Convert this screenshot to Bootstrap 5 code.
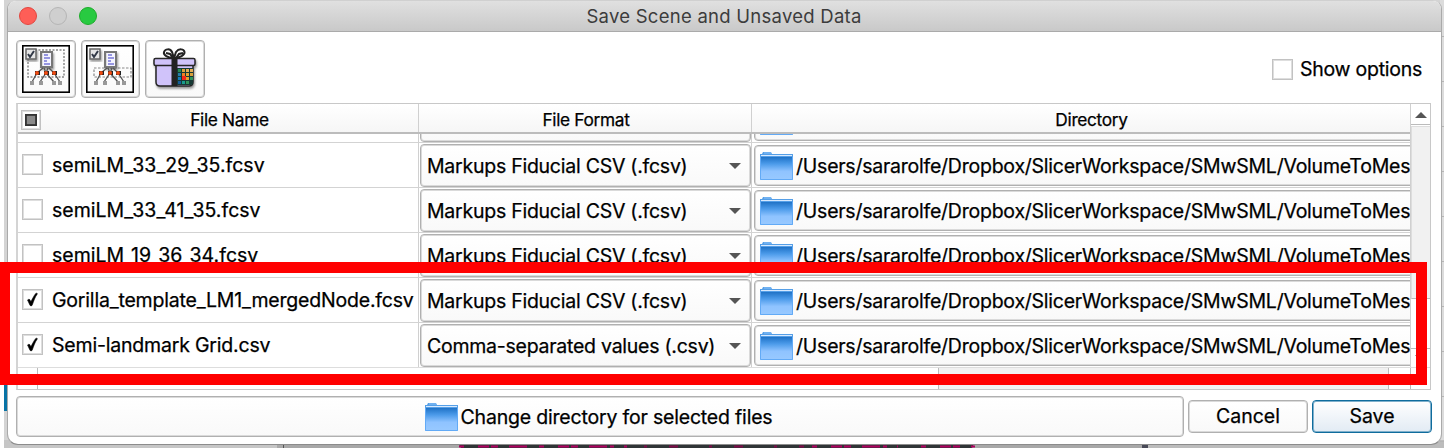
<!DOCTYPE html>
<html lang="en">
<head>
<meta charset="utf-8">
<title>Save Scene and Unsaved Data</title>
<link href="https://cdn.jsdelivr.net/npm/bootstrap@5.3.0/dist/css/bootstrap.min.css" rel="stylesheet">
<style>
body{width:1444px;height:448px;font-family:Inter,"Liberation Sans",sans-serif;font-size:19.5px;line-height:24px;letter-spacing:-.25px;color:#000;-webkit-text-stroke:.25px #000;background:linear-gradient(90deg,#fff 0 4px,#d4d4d4 4px 1440px,#dcdcdc 1440px)}
.desk{height:448px;padding:0 2px 0 7px}
.desk-blue{left:4px;top:384px;width:8px;height:27px;background:#0873a5}
.desk-below{left:4px;top:440px;width:1440px;height:8px}
.win{height:445px;border:1px solid #aaa;border-top-color:#d0d0d0;border-bottom-color:#8c8c8c;border-radius:9px 9px 11px 11px;background:#fff}
.titlebar{height:31px;flex:none;background:linear-gradient(#e0e0e0,#c9c9c9);border-bottom:1px solid #aaa;padding:0 90px 1px 11px;font-size:18.5px;letter-spacing:.26px;color:#3c3c3c;-webkit-text-stroke:0}
.lamps{gap:12px}
.lamp{width:18px;height:18px;border-radius:50%;border:1px solid}
.lamp-r{background:#fe5e57;border-color:#e2463f}.lamp-o{background:#cfcfcf;border-color:#b5b5b5}.lamp-g{background:#28ca41;border-color:#1dac2b}
.winbody{padding:8px 10px 0 8px}
.tools{height:58px;gap:5px;margin-bottom:5px}
.face{border:1px solid #b0b0b0;box-shadow:inset 0 0 0 1px #dadada;border-radius:4px;background:linear-gradient(#fff,#f9f9f9);padding:0;color:#000}
.tool{width:59.5px;height:58px}
.tool svg{display:block}
.box{width:21px;height:21px;border:1.500px solid #c2c2c2;box-shadow:inset 0 0 0 1px #dedede;background:#fff;flex:none}
.box svg{margin:1px}
.opts{gap:7px;padding-right:9px}
.tbl{height:287px;border:1px solid #c8c8c8;border-left:2px solid #d4d4d4}
.view{width:1392px;flex:none;overflow:hidden}
.line{flex:none}
.head{height:30px;background:linear-gradient(#fff,#f6f6f6);border-bottom:2px solid #bcbcbc;font-size:17.3px;letter-spacing:-.32px}
.head .box{width:20px;height:20px}
.c1{width:401px;border-right:1px solid #d0d0d0;flex:none}
.c2{width:333px;border-right:1px solid #d0d0d0;flex:none}
.c3{width:659px;flex:none;overflow:hidden}
.head .c1{padding:3px 0 0 3px}
.head .c2{padding:4px 0 0 2px}
.head .c3{padding:4px 0 0 20px}
.rowline{height:45px;flex:none;border-bottom:1px solid #d3d3d3}
.rowline .c1{padding:0 0 2px 4px;gap:9px}
.rowline .c1 span+span{padding-top:1px}
.rowline .c2{padding:1px 0 0 1px}
.rowline .c3{padding:2px 0 2px 2px}
.wide-set{letter-spacing:.02px}
.name-set{letter-spacing:-.19px}
.combo{height:43px;width:331px;padding:1px 9px 0 6px}
.dir{height:41px;width:900px;padding:0 0 0 4px;gap:2px;letter-spacing:-.235px}
.partial{height:9px;overflow:hidden;flex:none}
.vbar{border-left:1px solid #d0d0d0;background:#fff}
.vup{height:21px;border-bottom:1px solid #bbb}
.track{background:#f1f1f1}
.vtrack{height:173px;border:solid #ddd;border-width:1px 0 1px 1px;border-bottom-color:#bbb;margin-top:1px}
.vthumb{height:50px;border-bottom:1px solid #bbb}
.hbar{height:22px;border-top:1px solid #ddd;background:#fff}
.hbar>div{border-right:1px solid #bbb;flex:none}
.foot{padding-top:6px;gap:4px;width:1416px}
.chg{width:1168px;height:41px;gap:2px;letter-spacing:-.19px;padding-right:4px}
.dlg{height:33px;width:120px;padding-bottom:1px}
.save{border-color:#0f6c9d;box-shadow:inset 0 0 0 1px #7fb0cc;background:linear-gradient(#fff,#e2ebf4)}
.redbox{left:0;top:262px;width:1427px;height:123px;border:11px solid #f00;border-left-width:10px}
</style>
</head>
<body class="position-relative overflow-hidden">
<svg width="0" height="0" class="position-absolute">
<defs>
<linearGradient id="fg" x1="0" y1="0" x2="0" y2="1"><stop offset="0" stop-color="#1f72c6"/><stop offset=".3" stop-color="#4c9bea"/><stop offset=".62" stop-color="#8fc3ff"/><stop offset="1" stop-color="#98c9ff"/></linearGradient>
<filter id="sh" x="-20%" y="-20%" width="150%" height="150%"><feDropShadow dx="1" dy="2" stdDeviation="1" flood-opacity=".4"/></filter>
<symbol id="folder" viewBox="0 0 35 32"><path d="M1 4h2l1-2h8l1 2h21v6H1z" fill="#559fe7"/><path d="M5 3h7" stroke="#8cc3fa"/><path d="M2 5.500h31" stroke="#d8eaff"/><rect x="1" y="7" width="33" height="23" fill="url(#fg)"/><path d="M1.500 7v22.500h32V7" fill="none" stroke="#62aaf6"/></symbol>
<symbol id="tree" viewBox="0 0 48 48">
<rect x="19" y="7" width="11" height="15" fill="#ddd" stroke="#777" stroke-width="2" filter="url(#sh)"/><rect x="21" y="8" width="8" height="13" fill="#f4f4ff"/><path d="M22 10h4M22 13h6M22 16h3M22 19h6" stroke="#7777d8" stroke-width="1.500"/>
<path d="M21 23L15 28 10 37M22 23 24 28 18 37M26 23 24 28 32 37M27 23 32 28 38 37" fill="none" stroke="#555" stroke-width="1.300"/>
<g fill="#222"><rect x="13" y="26" width="5" height="4"/><rect x="22" y="26" width="5" height="4"/><rect x="30" y="26" width="5" height="4"/></g>
<g fill="#ef4b12"><circle cx="15" cy="28" r="2"/><circle cx="24" cy="28" r="2"/><circle cx="32" cy="28" r="2"/></g>
<g fill="#999"><rect x="8" y="36" width="4" height="4"/><rect x="17" y="36" width="4" height="4"/><rect x="30" y="36" width="4" height="4"/><rect x="36" y="36" width="4" height="4"/></g>
<rect x="4" y="4" width="10" height="10" fill="#e6e6e6" stroke="#666" stroke-width="1.500" filter="url(#sh)"/><path d="M6 9l2 3 4-6" fill="none" stroke="#333a48" stroke-width="2"/>
<rect x=".75" y=".75" width="46.500" height="46.500" fill="none" stroke="#000" stroke-width="1.700"/></symbol>
<symbol id="tick" viewBox="0 0 17 17"><path d="M3.500 9c1-1 2.300-1 2.800.5L7 10.500C8.500 7.500 10 4.500 11.700 2.500c1-.7 2-.2 1.500.7C11 6 9.800 10 8.300 14c-.5 1.200-2 1.200-2.500 0z" fill="#000" stroke="#000" stroke-width=".5"/></symbol>
</defs></svg>

<div class="position-absolute desk-blue"></div>
<svg class="position-absolute desk-below" viewBox="0 0 1440 8"><rect width="273" height="8" fill="#c6c6c6"/><rect x="273" width="7" height="8" fill="#aaa"/><rect x="279" width="1" height="8" fill="#555"/><rect x="280" width="1160" height="8" fill="#a8a8a8"/><path d="M452 0h520l-4 8H457z" fill="#303436"/><path d="M455 6.500h70M535 6.500h92M808 6.500h86M917 6.500h54" stroke="#b00060" stroke-width="2" stroke-dasharray="5 14 11 2 7 11 18 3 4 10 3 7"/><path d="M640 6.500h160" stroke="#7e0a49" stroke-width="2" stroke-dasharray="3 22 9 31"/><rect x="1138" width="6" height="8" fill="#484957"/><rect x="1144" width="296" height="8" fill="#bcbcbc"/></svg>
<svg class="position-absolute end-0 top-0" width="4" height="448"><path d="M0 36.500h4M0 81.500h4M0 126.500h4M0 171.500h4M0 216.500h4M0 261.500h4M0 306.500h4M0 351.500h4M0 396.500h4M0 441.500h4" stroke="#b5b5b5"/></svg>

<main class="desk position-relative">
<div class="win d-flex flex-column overflow-hidden">
  <header class="titlebar d-flex align-items-center">
    <div class="lamps d-flex"><span class="lamp lamp-r"></span><span class="lamp lamp-o"></span><span class="lamp lamp-g"></span></div>
    <div class="flex-grow-1 text-center">Save Scene and Unsaved Data</div>
  </header>
  <div class="winbody">
    <div class="tools d-flex">
      <button class="face tool d-flex align-items-center justify-content-center"><svg width="48" height="48" viewBox="0 0 48 48"><rect x="6" y="5" width="36" height="27" fill="none" stroke="#888" stroke-width="1.500" stroke-dasharray="2 1.500"/><use href="#tree"/></svg></button>
      <button class="face tool d-flex align-items-center justify-content-center"><svg width="48" height="48" viewBox="0 0 48 48"><rect x="8" y="23" width="37" height="9" fill="none" stroke="#888" stroke-width="1.200" stroke-dasharray="2.500 1.500"/><use href="#tree"/></svg></button>
      <button class="face tool d-flex align-items-center justify-content-center"><svg width="48" height="48" viewBox="0 0 48 48">
        <g filter="url(#sh)"><path d="M5 17h37v20q0 4-4 4H9q-4 0-4-4z" fill="#d0c3fa" stroke="#252525" stroke-width="1.500"/><rect x="3" y="13.500" width="41" height="7" rx="1.500" fill="#d0c3fa" stroke="#252525" stroke-width="1.500"/><rect x="20.500" y="13" width="6" height="28" fill="#202020"/></g>
        <path d="M22 13C17 13 12 10 13 7s6-4 8 0l2 6 2-6c3-4 8-3 8.500 0s-5 6-9.500 6M22 13l-3-4-4-1M25 13l3-4 4-1" fill="none" stroke="#222" stroke-width="2"/>
        <path d="M26 23h16v15q0 2-2 2H26z" fill="#173a35"/>
        <path d="M27 24h3v3h-3z" fill="#278a54"/><path d="M31 24h3v3h-3zM39 28h3v3h-3z" fill="#d9a13c"/><path d="M35 24h3v3h-3zM39 24h3v3h-3z" fill="#e3ad55"/><path d="M27 28h3v3h-3z" fill="#267eaa"/><path d="M31 28h3v3h-3z" fill="#f07e24"/><path d="M35 28h3v3h-3zM35 32h3v3h-3z" fill="#e7a12e"/><path d="M27 32h3v3h-3z" fill="#147cba"/><path d="M31 31h4v4h-4z" fill="#f32718"/><path d="M39 32h3v3h-3zM35 36h3v3h-3z" fill="#31935b"/><path d="M27 36h3v3h-3z" fill="#155c9a"/><path d="M31 36h3v3h-3z" fill="#1a9c8d"/></svg></button>
      <label class="opts d-flex align-items-center ms-auto"><span class="box"></span><span>Show options</span></label>
    </div>
    <section class="tbl d-flex flex-column">
      <div class="d-flex flex-grow-1 overflow-hidden">
        <div class="view d-flex flex-column">
          <div class="head line d-flex">
            <div class="c1 d-flex align-items-center"><span class="box d-flex align-items-center justify-content-center"><svg width="12" height="12" viewBox="0 0 13 13"><rect x="1" y="1" width="11" height="11" fill="#8a8a8a" stroke="#333" stroke-width="2"/></svg></span><span class="flex-grow-1 text-center">File Name</span></div>
            <div class="c2 d-flex align-items-center justify-content-center">File Format</div>
            <div class="c3 d-flex align-items-center justify-content-center">Directory</div>
          </div>
          <div class="partial d-flex flex-column justify-content-end"><div class="rowline d-flex"><div class="c1"></div><div class="c2"><div class="face combo"></div></div><div class="c3"><div class="face dir d-flex align-items-center"><svg width="35" height="32"><use href="#folder"/></svg></div></div></div></div>
          <div id="rows"></div>
        </div>
        <div class="vbar d-flex flex-column flex-grow-1">
          <div class="vup d-flex align-items-center justify-content-center"><svg width="12" height="7"><path d="M0 7L6 1l6 6z" fill="#555"/></svg></div>
          <div class="track vtrack"></div>
          <div class="vthumb"></div>
          <div class="d-flex align-items-center justify-content-center flex-grow-1"><svg width="12" height="7"><path d="M0 0h12L6 6z" fill="#555"/></svg></div>
        </div>
      </div>
      <div class="hbar d-flex"><div style="width:20px"></div><div style="width:901px"></div><div class="track" style="width:450px"></div><div style="width:22px"></div></div>
    </section>
    <div class="foot d-flex align-items-center">
      <button class="face chg d-flex align-items-center justify-content-center"><svg width="35" height="32"><use href="#folder"/></svg><span>Change directory for selected files</span></button>
      <button class="face dlg">Cancel</button>
      <button class="face dlg save">Save</button>
    </div>
  </div>
</div>
</main>
<div class="position-absolute redbox"></div>
<script>
const files=[["semiLM_33_29_35.fcsv",0,"wide-set"],["semiLM_33_41_35.fcsv",0,"wide-set"],["semiLM_19_36_34.fcsv",0,"wide-set"],["Gorilla_template_LM1_mergedNode.fcsv",1,"name-set"],["Semi-landmark Grid.csv",1,"name-set","Comma-separated values (.csv)"]];
document.getElementById("rows").innerHTML=files.map(([name,on,cls,fmt])=>`<div class="rowline d-flex"><div class="c1 d-flex align-items-center text-nowrap"><span class="box">${on?'<svg class="d-block" width="17" height="17"><use href="#tick"/></svg>':''}</span><span class="${cls}">${name}</span></div><div class="c2"><div class="face combo d-flex align-items-center justify-content-between text-nowrap"><span>${fmt||"Markups Fiducial CSV (.fcsv)"}</span><svg width="12" height="8"><path d="M0 1h12L6 7z" fill="#555"/></svg></div></div><div class="c3"><div class="face dir d-flex align-items-center text-nowrap"><svg width="35" height="32"><use href="#folder"/></svg><span>/Users/sararolfe/Dropbox/SlicerWorkspace/SMwSML/VolumeToMes</span></div></div></div>`).join("");
</script>
<script src="https://cdn.jsdelivr.net/npm/bootstrap@5.3.0/dist/js/bootstrap.bundle.min.js"></script>
</body>
</html>
